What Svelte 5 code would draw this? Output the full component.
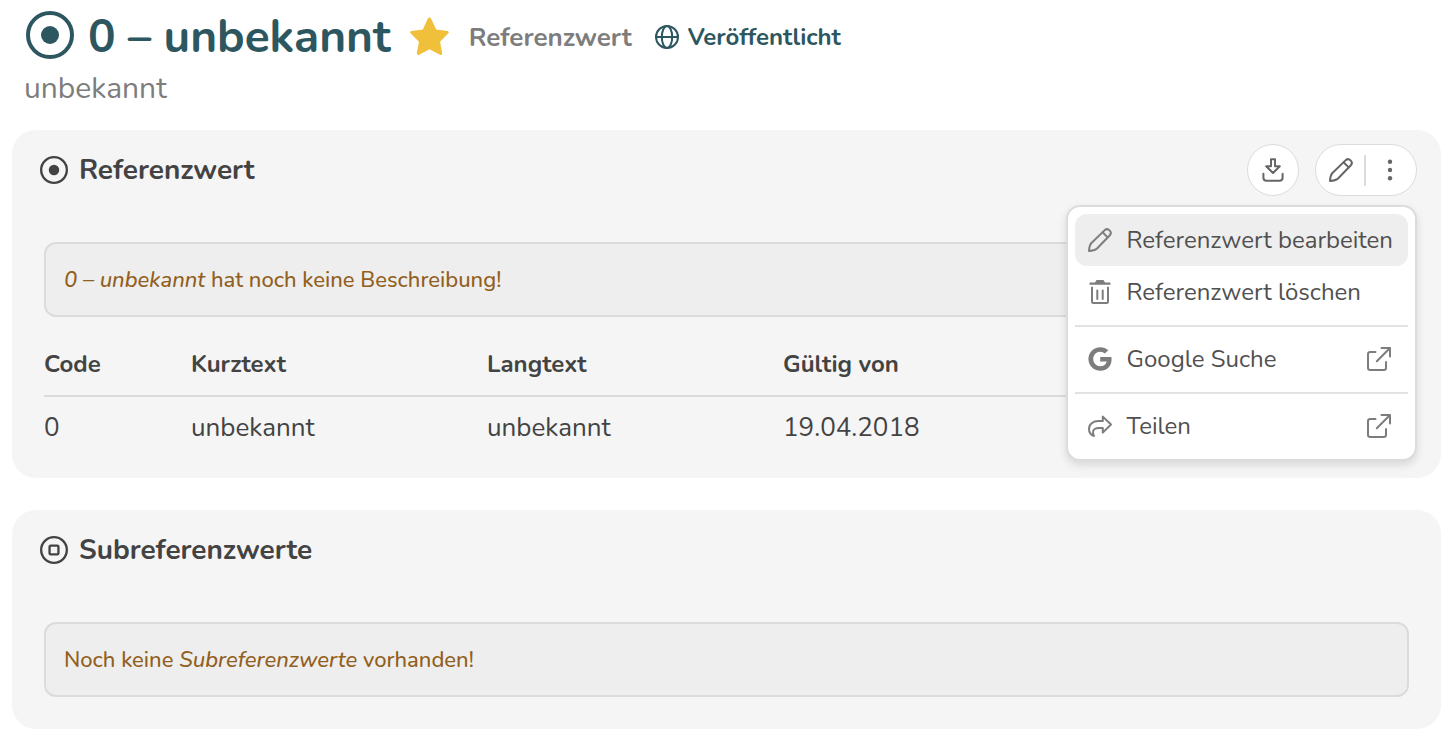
<script lang="ts">
  type IconName =
    | 'value'
    | 'subvalue'
    | 'star'
    | 'globe'
    | 'download'
    | 'pencil'
    | 'dots'
    | 'trash'
    | 'google'
    | 'share'
    | 'external';

  interface MenuItem {
    label: string;
    icon: IconName;
    external?: boolean;
  }

  const code = '0';
  const shortText = 'unbekannt';
  const longText = 'unbekannt';
  const validFrom = '19.04.2018';

  const menuGroups: MenuItem[][] = [
    [
      { label: 'Referenzwert bearbeiten', icon: 'pencil' },
      { label: 'Referenzwert löschen', icon: 'trash' }
    ],
    [{ label: 'Google Suche', icon: 'google', external: true }],
    [{ label: 'Teilen', icon: 'share', external: true }]
  ];

  let menuOpen = $state(true);
  let title = $derived(`${code} – ${shortText}`);
</script>

{#snippet icon(name: IconName)}
  <svg class="icon icon-{name}" viewBox="0 0 24 24" aria-hidden="true">
    {#if name === 'value'}
      <circle cx="12" cy="12" r="11" />
      <circle class="solid" cx="12" cy="12" r="4.5" />
    {:else if name === 'subvalue'}
      <circle cx="12" cy="12" r="11" />
      <rect x="8.2" y="8.2" width="7.6" height="7.6" rx="1" />
    {:else if name === 'star'}
      <path
        class="solid"
        d="M10.9 1.1q1.1-1.6 2.1 0L16.1 7.7l7 .9q1.3.4.4 1.6l-5 5 1.3 7.1q0 1.5-1.3 1L12 19.9l-6.4 3.4q-1.4.5-1.4-1l1.3-7.1-5-5q-.9-1.2.4-1.6l7-.9z"
      />
    {:else if name === 'globe'}
      <circle cx="12" cy="12" r="11" />
      <ellipse cx="12" cy="12" rx="5.2" ry="11" />
      <path d="M1 12h22" />
    {:else if name === 'download'}
      <path d="M10 1.200h4v7h4.800L12 15 5.200 8.200H10z" />
      <path d="M2.400 15.800v3.800q0 3.200 3.200 3.200h12.800q3.200 0 3.200-3.200v-3.800" />
    {:else if name === 'pencil'}
      <path d="M1 23C1.200 19.800 1.800 17 3.200 15.200L17 1.900Q19.300 .2 21.600 2.400T22.100 7L8.800 20.800C7 22.200 4.200 22.800 1 23z" />
      <path d="M14.600 4.300l5.100 5.100" />
    {:else if name === 'dots'}
      <circle class="solid" cx="12" cy="3.800" r="2.200" />
      <circle class="solid" cx="12" cy="12" r="2.200" />
      <circle class="solid" cx="12" cy="20.200" r="2.200" />
    {:else if name === 'trash'}
      <path d="M4 7.500v14q0 1.500 1.500 1.500h13q1.500 0 1.500-1.500v-14" />
      <path d="M9.300 10.500v8.500M14.700 10.500v8.500" />
      <path class="solid" d="M2.200 2.600H7L8.500 0h7L17 2.600h4.800q.8 0 .8 1.100t-.8 1.100H2.200q-.8 0-.8-1.100t.8-1.100z" />
    {:else if name === 'google'}
      <path
        class="solid"
        d="M12.200 10h11.200c1.300 7.600-3.400 13.800-11.200 13.800C5.600 23.800.4 18.500.4 12S5.600.2 12.200.2c3.200 0 5.900 1.200 8 3.100l-3.400 3.300c-1.200-1.100-2.800-1.800-4.600-1.800-3.900 0-7 3.200-7 7.200s3.100 7.200 7 7.200c3.500 0 5.900-2 6.500-4.800h-6.500z"
      />
    {:else if name === 'share'}
      <path
        d="M14.800 2.600L23 10.500l-8.200 8.100v-4.700H11c-3.600 0-6 1.600-6 4.400 0 1.400.3 2.500 1 3.700C2.800 20.800 1 18.300 1 14.900c0-4.800 3.900-7.900 9.500-7.900h4.300z"
      />
    {:else if name === 'external'}
      <path d="M8.500 5H3.200Q1 5 1 7.200v13.600Q1 23 3.200 23h13.600q2.200 0 2.200-2.200V15" />
      <path d="M14.500 1H23v8.500M23 1L9.800 14.200" />
    {/if}
  </svg>
{/snippet}

<main>
  <header>
    <div class="title-row">
      {@render icon('value')}
      <h1>{title}</h1>
      <button class="favorite" type="button" aria-label="Favorit">{@render icon('star')}</button>
      <span class="kind">Referenzwert</span>
      <span class="status">{@render icon('globe')} Veröffentlicht</span>
    </div>
    <p class="subtitle">{longText}</p>
  </header>

  <section class="card">
    <div class="card-head">
      <h2>{@render icon('value')} Referenzwert</h2>

      <div class="actions">
        <button class="btn-round" type="button" aria-label="Herunterladen">
          {@render icon('download')}
        </button>
        <div class="btn-group">
          <button type="button" aria-label="Bearbeiten">{@render icon('pencil')}</button>
          <span class="separator"></span>
          <button
            type="button"
            aria-label="Weitere Aktionen"
            aria-expanded={menuOpen}
            onclick={() => (menuOpen = !menuOpen)}
          >
            {@render icon('dots')}
          </button>
        </div>

        {#if menuOpen}
          <div class="menu" role="menu">
            {#each menuGroups as group, i}
              {#if i > 0}
                <hr />
              {/if}
              {#each group as item, j}
                <button class="menu-item" class:active={i === 0 && j === 0} type="button" role="menuitem">
                  {@render icon(item.icon)}
                  <span class="label">{item.label}</span>
                  {#if item.external}
                    {@render icon('external')}
                  {/if}
                </button>
              {/each}
            {/each}
          </div>
        {/if}
      </div>
    </div>

    <p class="notice"><em>{title}</em> hat noch keine Beschreibung!</p>

    <table>
      <thead>
        <tr>
          <th class="col-code">Code</th>
          <th class="col-text">Kurztext</th>
          <th class="col-text">Langtext</th>
          <th>Gültig von</th>
        </tr>
      </thead>
      <tbody>
        <tr>
          <td>{code}</td>
          <td>{shortText}</td>
          <td>{longText}</td>
          <td>{validFrom}</td>
        </tr>
      </tbody>
    </table>
  </section>

  <section class="card">
    <div class="card-head">
      <h2>{@render icon('subvalue')} Subreferenzwerte</h2>
    </div>
    <p class="notice">Noch keine <em>Subreferenzwerte</em> vorhanden!</p>
  </section>
</main>

<style>
  :global(body) {
    background: #fff;
    color: #434343;
    font-family: Nunito, 'Open Sans', 'Noto Sans', sans-serif;
  }

  main {
    display: flex;
    flex-direction: column;
    padding: 0 13px 12px 12px;
  }

  h1,
  h2,
  p {
    margin: 0;
  }

  button {
    display: flex;
    align-items: center;
    justify-content: center;
    background: none;
    border: none;
    padding: 0;
    color: inherit;
    font: inherit;
    cursor: pointer;
  }

  .icon {
    flex: none;
    width: 24px;
    height: 24px;
    fill: none;
    stroke: currentColor;
    stroke-width: 2;
    stroke-linejoin: round;
    stroke-linecap: round;
    overflow: visible;
  }

  .icon .solid {
    fill: currentColor;
    stroke: none;
  }

  header {
    padding: 0 12px;
    margin-bottom: 26px;
  }

  .title-row {
    display: flex;
    align-items: center;
    height: 74px;
    color: #2d5760;
    font-weight: 700;
  }

  .title-row > .icon {
    width: 48px;
    height: 48px;
    margin: 0 14px 4px 2px;
  }

  h1 {
    font-size: 46px;
    line-height: 64px;
    font-weight: 700;
    white-space: nowrap;
  }

  .favorite {
    margin: 0 20px 2px 19px;
    color: #f1c03a;
  }

  .favorite .icon {
    width: 39px;
    height: 39px;
  }

  .kind {
    margin-right: 23px;
    color: #7d7d7d;
    font-size: 26px;
  }

  .status {
    display: flex;
    align-items: center;
    gap: 9px;
    font-size: 24px;
  }

  .subtitle {
    color: #7d7d7d;
    font-size: 30px;
    line-height: 30px;
  }

  .card {
    background: #f5f5f5;
    border-radius: 24px;
    padding: 0 32px 20px;
    margin-bottom: 32px;
  }

  .card-head {
    position: relative;
    display: flex;
    align-items: center;
    justify-content: space-between;
    height: 80px;
    margin: 0 -8px 32px;
  }

  h2 {
    display: flex;
    align-items: center;
    gap: 11px;
    padding-left: 4px;
    font-size: 28px;
    line-height: 36px;
    font-weight: 700;
  }

  h2 .icon {
    width: 28px;
    height: 28px;
  }

  .actions {
    display: flex;
    gap: 16px;
    color: #666;
  }

  .btn-round,
  .btn-group {
    height: 52px;
    box-sizing: border-box;
    background: #fff;
    border: 1px solid #dcdcdc;
    border-radius: 26px;
  }

  .btn-round {
    width: 52px;
  }

  .btn-group {
    display: flex;
    align-items: center;
    padding: 0 3px 0 1px;
  }

  .btn-group button {
    width: 47px;
    height: 50px;
  }

  .separator {
    width: 2px;
    height: 31px;
    background: #dcdcdc;
  }

  .menu {
    position: absolute;
    z-index: 1;
    top: 75px;
    right: 0;
    min-width: 351px;
    box-sizing: border-box;
    padding: 7px;
    background: #fff;
    border: 2px solid #dcdcdc;
    border-radius: 14px;
    box-shadow: 0 4px 8px rgba(0, 0, 0, 0.12);
  }

  .menu-item {
    width: 100%;
    height: 52px;
    gap: 15px;
    padding: 0 15px 0 13px;
    border-radius: 12px;
    color: #7d7d7d;
    font-size: 24px;
    text-align: left;
  }

  .menu-item.active,
  .menu-item:hover {
    background: #eee;
  }

  .label {
    flex: 1;
    color: #505050;
    white-space: nowrap;
  }

  .label + .icon {
    margin-right: 2px;
  }

  hr {
    height: 2px;
    margin: 7px 0 6px;
    border: none;
    background: #e2e2e2;
  }

  .notice {
    padding: 21px 18px 20px;
    margin-bottom: 12px;
    background: #eee;
    border: 2px solid #dbdbdb;
    border-radius: 12px;
    color: #925f20;
    font-size: 22px;
    font-weight: 500;
    line-height: 30px;
  }

  table {
    width: 100%;
    margin-top: 14px;
    table-layout: fixed;
    border-collapse: collapse;
    text-align: left;
  }

  th {
    height: 62px;
    padding: 2px 0 0;
    border-bottom: 2px solid #dbdbdb;
    font-size: 24px;
    font-weight: 700;
  }

  td {
    height: 61px;
    padding: 0;
    font-size: 26px;
  }

  .col-code {
    width: 147px;
  }

  .col-text {
    width: 296px;
  }
</style>
